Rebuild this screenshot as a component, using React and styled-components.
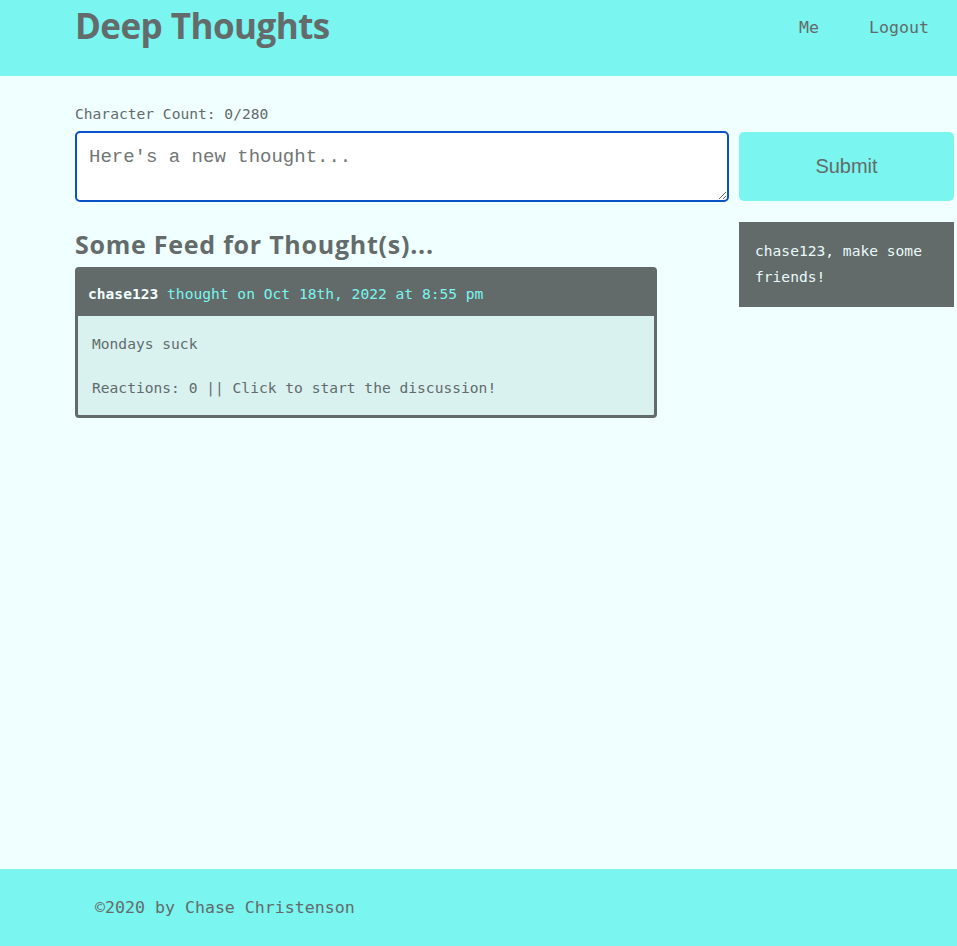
import React from "react";
import styled, { createGlobalStyle } from "styled-components";

const GlobalStyle = createGlobalStyle`
  html, body { margin: 0; padding: 0; }
  body {
    background: #f0ffff;
    color: #636b6b;
    font-family: "DejaVu Sans Mono", "Liberation Mono", monospace;
  }
  * { box-sizing: border-box; }
`;

const Page = styled.div`
  min-height: 100vh;
  display: flex;
  flex-direction: column;
`;

const Header = styled.header`
  background: #7af5ef;
  height: 76px;
  display: flex;
  justify-content: space-between;
  align-items: flex-start;
  padding: 0 28px 0 75px;
`;

const Title = styled.h1`
  margin: 5px 0 0;
  font-family: "Open Sans", Lato, sans-serif;
  font-weight: 700;
  font-size: 35px;
  line-height: 42px;
  letter-spacing: -0.55px;
  color: #636b6b;
`;

const Nav = styled.nav`
  display: flex;
  gap: 50px;
  margin-top: 18px;
`;

const NavLink = styled.a`
  font-size: 16.6px;
  line-height: 20px;
  color: #636b6b;
  text-decoration: none;
`;

const Main = styled.main`
  flex: 1;
  padding: 28px 0 0 75px;
  display: grid;
  grid-template-columns: 654px 215px;
  column-gap: 10px;
  align-content: start;
`;

const FormCol = styled.div`
  grid-column: 1 / 3;
  display: flex;
  flex-direction: column;
`;

const Count = styled.p`
  margin: 0 0 7px;
  font-size: 14.6px;
  line-height: 20px;
`;

const FormRow = styled.form`
  display: flex;
  gap: 10px;
  align-items: flex-start;
`;

const TextArea = styled.textarea`
  width: 654px;
  height: 71px;
  border: 2px solid #0a50c6;
  border-radius: 5px;
  outline: none;
  padding: 12px 12px;
  font-family: "Liberation Mono", monospace;
  font-size: 19px;
  line-height: 24px;
  color: #333;
  background: #fff;
  &::placeholder { color: #707575; }
`;

const SubmitButton = styled.button`
  width: 215px;
  height: 69px;
  margin-top: 1px;
  border: none;
  border-radius: 5px;
  background: #7af5ef;
  color: #636b6b;
  font-family: "Liberation Sans", Arial, sans-serif;
  font-size: 20px;
`;

const FeedCol = styled.section`
  margin-top: 20px;
`;

const FeedTitle = styled.h3`
  margin: 7px 0 8px;
  font-family: "Open Sans", Lato, sans-serif;
  font-weight: 700;
  font-size: 25px;
  line-height: 30px;
  letter-spacing: 0.75px;
  color: #636b6b;
`;

const Card = styled.article`
  width: 582px;
  border: 3px solid #636a6a;
  border-radius: 4px;
  background: #d9f2f0;
  overflow: hidden;
`;

const CardHeader = styled.div`
  background: #636a6a;
  height: 46px;
  padding: 0 10px;
  display: flex;
  align-items: center;
  font-size: 14.6px;
  color: #7af5ef;
  white-space: pre;
`;

const Username = styled.strong`
  color: #f0ffff;
  font-weight: 700;
`;

const CardBody = styled.div`
  padding: 17px 14px 16px;
  font-size: 14.6px;
  line-height: 22px;
  p { margin: 0; }
  p + p { margin-top: 22px; }
`;

const Sidebar = styled.aside`
  margin-top: 20px;
  width: 215px;
  background: #636a6a;
  color: #e8fbf9;
  padding: 16px 16px 16px;
  font-size: 14.6px;
  line-height: 26px;
  height: 85px;
`;

const Footer = styled.footer`
  background: #7af5ef;
  height: 77px;
  display: flex;
  align-items: center;
  padding-left: 95px;
  font-size: 16.6px;
  color: #636b6b;
`;

export default function App() {
  return (
    <Page>
      <GlobalStyle />
      <Header>
        <Title>Deep Thoughts</Title>
        <Nav>
          <NavLink href="#">Me</NavLink>
          <NavLink href="#">Logout</NavLink>
        </Nav>
      </Header>
      <Main>
        <FormCol>
          <Count>Character Count: 0/280</Count>
          <FormRow onSubmit={(e) => e.preventDefault()}>
            <TextArea placeholder="Here's a new thought..." />
            <SubmitButton type="submit">Submit</SubmitButton>
          </FormRow>
        </FormCol>
        <FeedCol>
          <FeedTitle>Some Feed for Thought(s)...</FeedTitle>
          <Card>
            <CardHeader>
              <Username>chase123</Username> thought on Oct 18th, 2022 at 8:55 pm
            </CardHeader>
            <CardBody>
              <p>Mondays suck</p>
              <p>Reactions: 0 || Click to start the discussion!</p>
            </CardBody>
          </Card>
        </FeedCol>
        <Sidebar>chase123, make some friends!</Sidebar>
      </Main>
      <Footer>©2020 by Chase Christenson</Footer>
    </Page>
  );
}
